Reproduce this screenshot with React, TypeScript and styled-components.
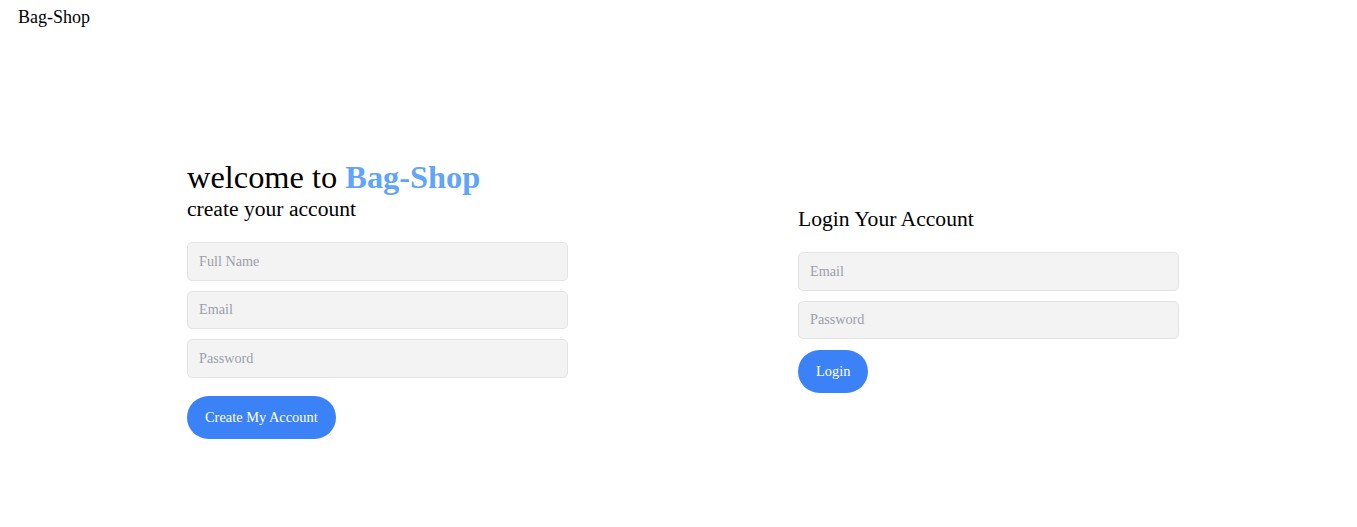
import React from "react";
import styled, { createGlobalStyle } from "styled-components";

const Global = createGlobalStyle`
  html, body { margin: 0; padding: 0; background: #ffffff; }
  body { font-family: "Liberation Serif", "Times New Roman", serif; color: #000; }
  * { box-sizing: border-box; }
`;

const Header = styled.header`
  padding: 7px 18px 8px;
  height: 36px;
  font-size: 18px;
  line-height: 20.7px;
`;

const Main = styled.main`
  height: 527px;
  display: flex;
  align-items: center;
  padding: 0 178px 0 187px;
  gap: 230px;
`;

const Column = styled.section<{ $lift?: number }>`
  width: 381px;
  display: flex;
  flex-direction: column;
  padding-bottom: ${(p) => p.$lift ?? 0}px;
`;

const Title = styled.h1`
  margin: 0;
  font-size: 32.4px;
  line-height: 34px;
  font-weight: 400;
`;

const Brand = styled.span`
  color: #60a5fa;
  font-weight: 700;
`;

const Subtitle = styled.h2<{ $mb: number; $lh: number }>`
  margin: 0 0 ${(p) => p.$mb}px;
  font-size: 21.6px;
  line-height: ${(p) => p.$lh}px;
  font-weight: 400;
`;

const Form = styled.form`
  display: flex;
  flex-direction: column;
  align-items: flex-start;
  gap: 10px;
`;

const Input = styled.input`
  width: 100%;
  height: 38.4px;
  padding: 0 11px;
  background: #f3f3f3;
  border: 1px solid #e3e3e3;
  border-radius: 5px;
  font-family: inherit;
  font-size: 14.2px;
  color: #111;
  outline: none;
  &::placeholder { color: #9c9ea8; }
`;

const Button = styled.button<{ $extra?: boolean }>`
  margin-top: ${(p) => (p.$extra ? "8px" : "1px")};
  height: 43px;
  padding: 0 18px;
  border: none;
  border-radius: 999px;
  background: #3b82f6;
  color: #fff;
  font-family: inherit;
  font-size: 14.4px;
  cursor: pointer;
`;

export default function App() {
  return (
    <>
      <Global />
      <Header>Bag-Shop</Header>
      <Main>
        <Column>
          <Title>
            welcome to <Brand>Bag-Shop</Brand>
          </Title>
          <Subtitle $mb={18} $lh={30}>create your account</Subtitle>
          <Form onSubmit={(e) => e.preventDefault()}>
            <Input type="text" placeholder="Full Name" />
            <Input type="email" placeholder="Email" />
            <Input type="password" placeholder="Password" />
            <Button type="submit" $extra>Create My Account</Button>
          </Form>
        </Column>
        <Column $lift={3}>
          <Subtitle $mb={17} $lh={32}>Login Your Account</Subtitle>
          <Form onSubmit={(e) => e.preventDefault()}>
            <Input type="email" placeholder="Email" />
            <Input type="password" placeholder="Password" />
            <Button type="submit">Login</Button>
          </Form>
        </Column>
      </Main>
    </>
  );
}
